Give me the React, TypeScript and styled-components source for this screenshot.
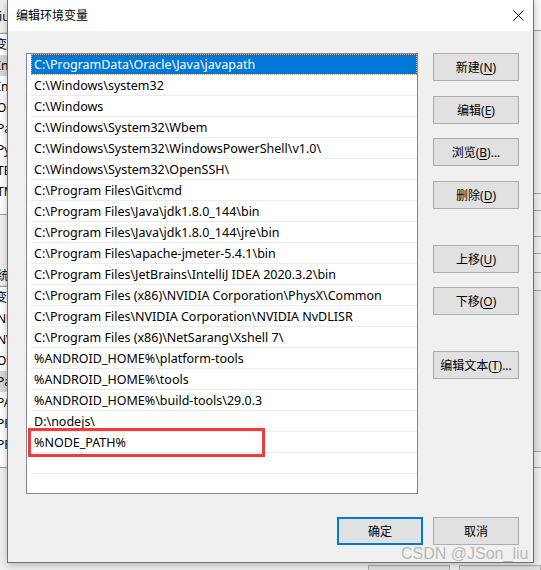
import React from 'react';
import styled, { createGlobalStyle } from 'styled-components';

const UI_FONT = `"Noto Sans", "Noto Sans CJK SC", sans-serif`;

const GlobalStyle = createGlobalStyle`
  html, body {
    margin: 0;
    padding: 0;
    background: #f0f0f0;
  }
  body {
    font-family: ${UI_FONT};
    font-size: 12px;
    color: #000;
  }
`;

const Desktop = styled.div`
  position: relative;
  width: 541px;
  height: 570px;
  overflow: hidden;
  background: #f0f0f0;
`;

// the system "environment variables" window that sits behind the dialog
const BackWindow = styled.div`
  position: absolute;
  inset: 0;
  display: grid;
  grid-template-columns: 7px 1fr 8px;
  grid-template-rows: 1fr 8px;
  background: #f0f0f0;
`;

const LeftStrip = styled.div`
  display: flex;
  flex-direction: column;
  overflow: hidden;
  white-space: nowrap;
`;

const StripLabel = styled.div<{ $h: number; $indent?: number; $bottom?: boolean }>`
  height: ${p => p.$h}px;
  flex: none;
  box-sizing: border-box;
  display: flex;
  align-items: ${p => (p.$bottom ? 'flex-end' : 'center')};
  padding-bottom: ${p => (p.$bottom ? 1 : 0)}px;
  margin-left: ${p => p.$indent ?? 0}px;
  border-bottom: 1px solid #dcdcdc;
`;

const StripList = styled.div`
  flex: none;
  background: #fff;
  border-top: 1px solid #a0a0a0;
  border-bottom: 1px solid #a0a0a0;
  padding-bottom: 12px;
`;

const StripRow = styled.div<{ $sel?: boolean; $indent?: number }>`
  height: 21px;
  line-height: 21px;
  padding-left: ${p => p.$indent ?? -3}px;
  text-indent: ${p => p.$indent ?? -3}px;
  background: ${p => (p.$sel ? '#d9d9d9' : 'transparent')};
`;

const StripGap = styled.div<{ $h: number }>`
  height: ${p => p.$h}px;
  flex: none;
`;

const RightStrip = styled.div`
  display: flex;
  flex-direction: column;
  border-left: 1px solid #9a9a9a;
`;

const RightBlock = styled.div<{ $h: number; $bg?: string }>`
  height: ${p => p.$h}px;
  flex: none;
  background: ${p => p.$bg ?? '#f0f0f0'};
  border-bottom: 1px solid #a6a6a6;
`;

const BackFooter = styled.div`
  grid-column: 1 / 4;
  display: flex;
  gap: 9px;
  padding-left: 368px;
  align-items: flex-end;
`;

const BackButton = styled.div`
  width: 86px;
  height: 4px;
  background: #e1e1e1;
  border: 1px solid #adadad;
  border-bottom: none;
`;

const Dialog = styled.div`
  position: absolute;
  left: 7px;
  top: -1px;
  width: 527px;
  height: 564px;
  box-sizing: border-box;
  border: 1px solid #707070;
  background: #f0f0f0;
  display: flex;
  flex-direction: column;
  box-shadow: 0 2px 8px rgba(0, 0, 0, 0.25);
`;

const TitleBar = styled.div`
  height: 31px;
  flex: none;
  background: #fff;
  display: flex;
  align-items: center;
  padding-left: 8px;
`;

const Title = styled.span`
  font-size: 12px;
  color: #000;
  margin-top: -1px;
`;

const CloseButton = styled.div`
  margin-left: auto;
  width: 30px;
  height: 31px;
  display: flex;
  align-items: center;
  justify-content: center;
`;

const Body = styled.div`
  display: flex;
  gap: 15px;
  padding: 22px 14px 0 18px;
`;

const ListBox = styled.div`
  width: 392px;
  height: 441px;
  box-sizing: border-box;
  border: 1px solid #828790;
  background: #fff;
  padding-left: 4px;
  overflow: hidden;
`;

const ListRow = styled.div<{ $selected?: boolean }>`
  height: 21px;
  box-sizing: border-box;
  padding-left: 3px;
  line-height: 21px;
  font-size: 12.5px;
  white-space: nowrap;
  border-bottom: 1px solid #ececec;
  background: ${p => (p.$selected ? '#0078d7' : '#fff')};
  color: ${p => (p.$selected ? '#fff' : '#000')};
  outline: ${p => (p.$selected ? '1px dotted #f4a460' : 'none')};
  outline-offset: -1px;
`;

const ButtonColumn = styled.div`
  display: flex;
  flex-direction: column;
  width: 86px;
`;

const WinButton = styled.div<{ $space?: number; $default?: boolean }>`
  margin-top: ${p => p.$space ?? 0}px;
  height: 28px;
  box-sizing: border-box;
  flex: none;
  width: 86px;
  display: flex;
  align-items: center;
  justify-content: center;
  background: #e1e1e1;
  border: ${p => (p.$default ? '2px solid #0078d7' : '1px solid #adadad')};
  font-size: 12px;
  color: #000;
`;

const Key = styled.span`
  text-decoration: underline;
  text-underline-offset: 2px;
`;

const Footer = styled.div`
  display: flex;
  justify-content: flex-end;
  gap: 10px;
  padding: 23px 14px 0 0;
`;

const Annotation = styled.div`
  position: absolute;
  left: 28px;
  top: 428px;
  width: 237px;
  height: 29px;
  box-sizing: border-box;
  border: 3px solid #ef3b3b;
`;

const Watermark = styled.div`
  position: absolute;
  left: 401px;
  top: 545px;
  font-family: "Liberation Sans", Arial, sans-serif;
  font-size: 16px;
  color: rgba(160, 160, 160, 0.7);
  white-space: nowrap;
`;

const paths = [
  'C:\\ProgramData\\Oracle\\Java\\javapath',
  'C:\\Windows\\system32',
  'C:\\Windows',
  'C:\\Windows\\System32\\Wbem',
  'C:\\Windows\\System32\\WindowsPowerShell\\v1.0\\',
  'C:\\Windows\\System32\\OpenSSH\\',
  'C:\\Program Files\\Git\\cmd',
  'C:\\Program Files\\Java\\jdk1.8.0_144\\bin',
  'C:\\Program Files\\Java\\jdk1.8.0_144\\jre\\bin',
  'C:\\Program Files\\apache-jmeter-5.4.1\\bin',
  'C:\\Program Files\\JetBrains\\IntelliJ IDEA 2020.3.2\\bin',
  'C:\\Program Files (x86)\\NVIDIA Corporation\\PhysX\\Common',
  'C:\\Program Files\\NVIDIA Corporation\\NVIDIA NvDLISR',
  'C:\\Program Files (x86)\\NetSarang\\Xshell 7\\',
  '%ANDROID_HOME%\\platform-tools',
  '%ANDROID_HOME%\\tools',
  '%ANDROID_HOME%\\build-tools\\29.0.3',
  'D:\\nodejs\\',
  '%NODE_PATH%',
  '',
  '',
];

// only the slivers of the window behind the dialog show, so just the first letters
const userVars = ['Int', 'Int', 'Or', 'Pa', 'Py', 'TE', 'TM'];
const sysVars = ['NU', 'NV', 'OS', 'Pa', 'PA', 'PR', 'PR'];

const sideButtons = [
  { label: '新建', key: 'N', space: 0 },
  { label: '编辑', key: 'E', space: 15 },
  { label: '浏览', key: 'B', space: 14, dots: true },
  { label: '删除', key: 'D', space: 15 },
  { label: '上移', key: 'U', space: 36 },
  { label: '下移', key: 'O', space: 14 },
  { label: '编辑文本', key: 'T', space: 36, dots: true },
];

function CloseIcon() {
  return (
    <svg width="11" height="11" viewBox="0 0 11 11">
      <path d="M0.5 0.5 L10.5 10.5 M10.5 0.5 L0.5 10.5" stroke="#000" strokeWidth="1" />
    </svg>
  );
}

function Backdrop() {
  return (
    <BackWindow>
      <LeftStrip>
        <StripLabel $h={33} $indent={-4}>liu</StripLabel>
        <StripList>
          <StripRow $indent={-5}>变</StripRow>
          {userVars.map((v, i) => (
            <StripRow key={v + i} $sel={i === 0}>{v}</StripRow>
          ))}
        </StripList>
        <StripGap $h={24} />
        <StripLabel $h={47} $indent={-3} $bottom>统</StripLabel>
        <StripList>
          <StripRow $indent={-5}>变</StripRow>
          {sysVars.map((v, i) => (
            <StripRow key={v + i} $sel={i === 3}>{v}</StripRow>
          ))}
        </StripList>
      </LeftStrip>
      <div />
      <RightStrip>
        <RightBlock $h={30} $bg="#fafafa" />
        <RightBlock $h={162} />
        <RightBlock $h={16} />
        <RightBlock $h={25} />
        <RightBlock $h={16} />
        <RightBlock $h={18} />
        <RightBlock $h={17} />
        <RightBlock $h={160} $bg="#e6e6e6" />
        <RightBlock $h={15} />
      </RightStrip>
      <BackFooter>
        <BackButton />
        <BackButton />
      </BackFooter>
    </BackWindow>
  );
}

export default function App() {
  return (
    <>
      <GlobalStyle />
      <Desktop>
        <Backdrop />
        <Dialog>
          <TitleBar>
            <Title>编辑环境变量</Title>
            <CloseButton>
              <CloseIcon />
            </CloseButton>
          </TitleBar>
          <Body>
            <ListBox>
              {paths.map((p, i) => (
                <ListRow key={i} $selected={i === 0}>{p}</ListRow>
              ))}
            </ListBox>
            <ButtonColumn>
              {sideButtons.map(b => (
                <WinButton key={b.key} $space={b.space}>
                  {b.label}(<Key>{b.key}</Key>){b.dots ? '...' : ''}
                </WinButton>
              ))}
            </ButtonColumn>
          </Body>
          <Footer>
            <WinButton $default>确定</WinButton>
            <WinButton>取消</WinButton>
          </Footer>
        </Dialog>
        <Annotation />
        <Watermark>CSDN @JSon_liu</Watermark>
      </Desktop>
    </>
  );
}
